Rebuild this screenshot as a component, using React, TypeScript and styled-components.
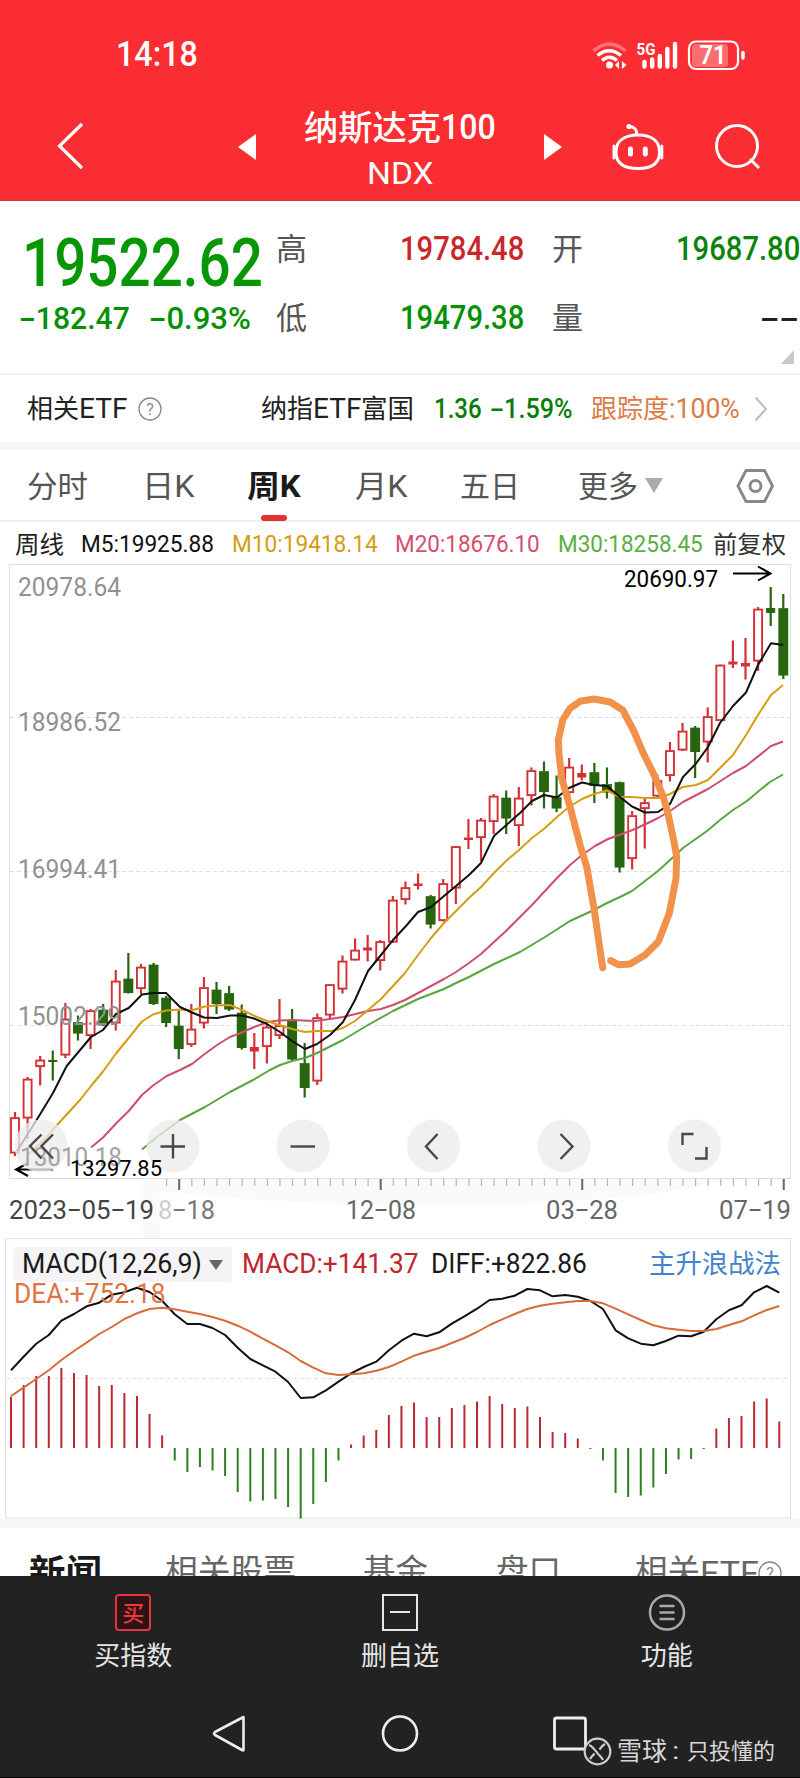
import React, { useLayoutEffect, useRef, useState } from "react";
import styled, { createGlobalStyle } from "styled-components";

const NUM = `Roboto, "Noto Sans CJK SC", sans-serif`;

const Global = createGlobalStyle`
  * { box-sizing: border-box; }
  body { margin: 0; background: #fff; font-family: ${NUM}; color: #222; }
  svg { display: block; flex: none; }
`;

/* ---------- text that is condensed to a given width ---------- */

const FitBox = styled.span<{ $w: number; $size: number; $color?: string; $weight?: number; $ml?: number }>`
  display: block;
  flex: none;
  width: ${(p) => p.$w}px;
  margin-left: ${(p) => p.$ml ?? 0}px;
  font-size: ${(p) => p.$size}px;
  line-height: 1;
  font-weight: ${(p) => p.$weight ?? 400};
  color: ${(p) => p.$color ?? "inherit"};
  white-space: pre;
`;
const FitInner = styled.span`
  display: inline-block;
  transform-origin: 0 50%;
`;
const Dash = styled.span`
  display: inline-block;
  width: 0.56em;
  text-align: center;
  transform: scaleX(1.7);
`;

type FitProps = { w: number; size: number; color?: string; weight?: number; ml?: number; children: string };

function Fit({ w, size, color, weight, ml, children }: FitProps) {
  const ref = useRef<HTMLSpanElement>(null);
  const [scale, setScale] = useState(1);
  useLayoutEffect(() => {
    if (ref.current) setScale(w / ref.current.offsetWidth);
  }, [w, size, weight, children]);
  return (
    <FitBox $w={w} $size={size} $color={color} $weight={weight} $ml={ml}>
      <FitInner ref={ref} style={{ transform: `scaleX(${scale})` }}>
        {children.split(/(-)/).map((part, i) => (part === "-" ? <Dash key={i}>-</Dash> : part))}
      </FitInner>
    </FitBox>
  );
}

/* ---------- layout parts ---------- */

const Page = styled.main`
  width: 800px;
  height: 1778px;
  display: flex;
  flex-direction: column;
  overflow: hidden;
  background: #fff;
`;
const Header = styled.header`
  height: 201px;
  flex: none;
  background: #fa2d33;
  border-bottom: 1px solid #c5393c;
  color: #fff;
`;
const StatusBar = styled.div`
  height: 108px;
  padding: 1px 54px 0 116px;
  display: flex;
  align-items: center;
  justify-content: space-between;
`;
const TitleBar = styled.div`
  height: 92px;
  padding: 0 40px 0 56px;
  display: flex;
  align-items: flex-start;
`;
const IconSlot = styled.span<{ $ml: number; $mt: number }>`
  flex: none;
  margin: ${(p) => p.$mt}px 0 0 ${(p) => p.$ml}px;
`;
const Titles = styled.div`
  width: 192px;
  margin-left: 48px;
  display: flex;
  flex-direction: column;
  align-items: center;
  gap: 11px;
`;
const TitleLine = styled.div`
  display: flex;
  align-items: center;
  height: 38px;
  padding-top: 1px;
`;

const Quote = styled.section`
  height: 174px;
  flex: none;
  padding-left: 19px;
  display: grid;
  grid-template-columns: 257px 124px 152px 124px 124px;
  grid-template-rows: 66px 72px 20px;
  padding-top: 15px;
  border-bottom: 2px solid #f1f1f1;
  align-items: center;
`;
const PriceCell = styled.div`
  padding: 29px 0 0 3px;
`;
const ChangeCell = styled.div`
  display: flex;
  gap: 19px;
`;
const Corner = styled.div`
  grid-column: 1 / -1;
  align-self: start;
  margin-top: -4px;
  display: flex;
  justify-content: flex-end;
  padding-right: 6px;
`;

const EtfRow = styled.section`
  height: 67px;
  flex: none;
  display: flex;
  align-items: center;
  padding: 1px 0 0 27px;
`;
const Band = styled.div<{ $h: number }>`
  height: ${(p) => p.$h}px;
  flex: none;
  background: #f6f6f6;
`;

const Tabs = styled.nav`
  height: 72px;
  flex: none;
  display: flex;
  align-items: center;
  padding-left: 27px;
  border-bottom: 2px solid #efefef;
`;
const Tab = styled.div<{ $ml?: number }>`
  position: relative;
  flex: none;
  margin-left: ${(p) => p.$ml ?? 0}px;
  height: 70px;
  padding-top: 3px;
  display: flex;
  align-items: center;
`;
const Underline = styled.i`
  position: absolute;
  left: 50%;
  bottom: -1px;
  width: 26px;
  height: 6px;
  margin-left: -13px;
  border-radius: 3px;
  background: #e03232;
`;
const MaRow = styled.div`
  height: 42px;
  flex: none;
  display: flex;
  align-items: center;
  padding: 3px 0 0 15px;
`;
const KChart = styled.section`
  height: 674px;
  flex: none;
`;
const MacdPanel = styled.section`
  position: relative;
  height: 281px;
  flex: none;
`;
const MacdHead = styled.div`
  position: absolute;
  inset: 8px 0 auto 13px;
  height: 36px;
  display: flex;
  align-items: center;
`;
const MacdPick = styled.div`
  width: 219px;
  height: 35px;
  padding: 1px 0 0 9px;
  display: flex;
  align-items: center;
  border-radius: 3px;
  background: #f5f3f5;
`;
const DeaLabel = styled.div`
  position: absolute;
  left: 14px;
  top: 43px;
`;

const NewsTabs = styled.nav`
  height: 48px;
  flex: none;
  overflow: hidden;
  display: flex;
  align-items: flex-start;
  padding: 28px 0 0 29px;
  background: #fff;
`;

const Bottom = styled.footer`
  height: 202px;
  flex: none;
  background: #222;
  border-bottom: 1px solid #000;
  position: relative;
`;
const Actions = styled.div`
  height: 104px;
  padding-top: 18px;
  display: grid;
  grid-template-columns: repeat(3, 1fr);
`;
const Action = styled.div`
  display: flex;
  flex-direction: column;
  align-items: center;
  gap: 12px;
  color: #e6e6e6;
`;
const BuyBox = styled.div`
  width: 36px;
  height: 37px;
  border: 2px solid #e0363c;
  border-radius: 4px;
  color: #ee383e;
  background: #2c1416;
  font: 500 22px/31px "Noto Sans CJK SC", sans-serif;
  text-align: center;
`;
const SystemNav = styled.div`
  padding: 34px 0 0 212px;
  display: flex;
  align-items: flex-start;
`;
const Watermark = styled.div`
  position: absolute;
  left: 583px;
  bottom: 11px;
  display: flex;
  align-items: center;
  color: #d8d8d8;
`;

/* ---------- chart data ---------- */

const STEP = 12.595;
/* high, body top, body bottom, low, rising */
const candles: [number, number, number, number, number][] = [
  [1112, 1117.5, 1153, 1156, 1], [1077, 1079, 1118, 1139, 1], [1056, 1060, 1066.5, 1085.5, 1], [1050.5, 1060.5, 1061.5, 1080.5, 0],
  [1003, 1019, 1055, 1058, 1], [1015.5, 1022.5, 1033, 1040.5, 0], [1009, 1010.5, 1035.5, 1049, 1], [1004, 1010, 1025, 1026, 0],
  [970, 981, 1023, 1030.5, 1], [953, 979, 992.5, 993.5, 0], [964, 967, 988.5, 994, 1], [963, 965, 1003.5, 1005, 0],
  [996, 998, 1022.5, 1027, 0], [1010.5, 1026, 1048.5, 1059, 0], [1004, 1029, 1044.5, 1047, 1], [977, 987.5, 1023, 1028.5, 1],
  [982, 990, 1003.5, 1014, 0], [986, 993.5, 1009, 1011, 0], [1004.5, 1013, 1047.5, 1049.5, 0], [1033, 1047.5, 1051, 1069, 1],
  [1025, 1027, 1046.5, 1063.5, 1], [999, 1025.5, 1035.5, 1039, 1], [1009, 1021, 1059, 1060, 0], [1043, 1063.5, 1087.5, 1097.5, 0],
  [1013.5, 1017.5, 1081, 1085, 1], [984, 984.5, 1015, 1018, 1], [955.5, 961, 989, 993.5, 1], [938.5, 950, 960, 960.5, 1],
  [935, 948, 950, 961.5, 1], [940, 941.5, 960.5, 970.5, 1], [896, 900, 942, 943, 1], [881.5, 887.5, 899.5, 904.5, 1],
  [873.5, 884, 885.5, 889.5, 1], [895, 896.5, 924, 928.5, 0], [879, 883.5, 920.5, 921.5, 1], [846, 846.5, 888, 904, 1],
  [819, 838, 839.5, 849, 1], [818, 820, 837.5, 861, 1], [794, 796, 821.5, 834, 1], [790.5, 798, 818, 834, 0],
  [787, 798, 825.5, 846, 1], [767.5, 770.5, 795.5, 805.5, 1], [761.5, 771.5, 791.5, 808.5, 0], [775.5, 797.5, 808, 812, 0],
  [758, 767, 792.5, 797, 1], [764.5, 773.5, 777, 780.5, 1], [763, 772.5, 785.5, 803, 0], [767.5, 784.5, 792, 798.5, 0],
  [781.5, 782.5, 867, 872.5, 0], [811, 815.5, 858.5, 869.5, 1], [799, 802.5, 808.5, 848.5, 1], [774.5, 780.5, 796, 797, 1],
  [742, 750.5, 775.5, 781.5, 1], [723, 731, 750, 751, 1], [726, 728, 751.5, 778, 0], [707.5, 716.5, 742, 762.5, 1],
  [664.5, 665, 720.5, 721, 1], [640.5, 662, 664, 668, 1], [638, 663.5, 666, 679.5, 1], [607, 609, 661, 671, 1],
  [587, 608.5, 612.5, 626, 0], [594, 608.5, 675, 679, 0],
];

const m5 = "17,1151 36.6,1120 53,1093 66.7,1066 91,1037 103,1030 116,1014 128.7,1008 142,994.5 153,993 166,993 180,1007 192,1012.5 204,1017.5 217,1018 230,1015.5 242,1015.5 254,1018.5 267,1024 280,1032 292,1041 305,1049 317,1044 330,1035 343,1022 355,1000 368,971 381,955 393,940 406,926 418,912 431,907 444,896 456,886 469,875 481,863 494,836 512,820 520,813 532,801 544,795 557,797.5 569,788 582,782.5 594,785 607,786 620,797 632,806.5 645,812.5 658,812 670,804 683,777 696,763.5 708,747 720,723 733,706 746,692.5 758,665 771,643.3 783.3,645";
const m10 = "28,1155 43,1141 58,1124 80,1100 91,1086 103,1071.5 116,1053.5 128.7,1038 142,1021.5 153,1014.5 166,1010.5 180,1009.5 192,1010.3 204,1006.7 217,1005.3 230,1005 242,1010 254,1015.7 267,1021 279,1025 292,1029 305,1032 317,1031 332,1031 343,1028 355,1021 368,1010 381,999 393,986 405,973 418,955 431,938 444,923 456,911 469,898 481,887 494,873 506,861 519,850 532,838 545,828 557,817 569,807 582,799 594,794 607,790.5 620,797 632,797 645,798 658,798 670,794 683,787 696,785 708,780 720,768 733,755 746,735 758,715 771,695 783,685";
const m20 = "91,1147.5 103,1137.5 116,1123.5 128.7,1111 142,1095 153,1085.5 166.7,1076 180,1070 192,1064 204,1054.5 217,1045 230,1037 242,1032.5 254,1027 268,1022 279,1020.5 292,1020 315,1021 330,1019 343,1017 368,1011 381,1009 393,1005 405,1000 420,992 431,986 444,979 456,972 469,963 481,954 494,942 506,931 520,917 532,905 557,878 570,865 582,855 595,846 608,839 622,834 635,829 650,822 658,818 670,811 683,802 708,789 733,773 746,766 771,746 783,741.5";
const m30 = "142,1149.5 157,1137 180,1120 205,1107 230,1092 254,1079.5 270,1070 280,1065 292,1061 305,1058 317,1053 343,1040 368,1025 393,1011 418,999 444,989 456,983 469,977 494,964 520,952 545,937 570,921 594,910 607,903 622,896 632,891 658,871 670,860 683,848 707,831 720,820 733,810 747,801 760,790 770,782 783,774.5";
const mark = "602.7,967.7 599.3,945 594,908.3 586.7,866.7 580,845 570,806.7 561.7,778.3 559,753.3 558.3,740 562.7,720 570,708.3 580,701.3 594,699 610,702 622.7,710 633.3,730 643.3,753.3 653.3,773.3 663.3,796.7 668.3,815 674,841.7 676.7,856.7 676,878.3 669.3,913.3 658.3,941.7 645,955 630,964 618.3,964.7 610.7,960.7";

const bars = [
  51.3, 63, 72, 72, 80, 75, 73, 62, 63, 55, 52, 34, 12.5, -12.5, -24, -19, -22.5, -28, -44, -53.5, -52.5, -51, -59, -70.5, -56, -34,
  -12.5, 3.5, 12.5, 18, 33, 42, 45.5, 31, 31, 40, 43, 46.5, 52, 44, 40, 41.5, 31, 16, 15, 9.5, -1, -12.5, -45, -49, -47.5, -39.5, -26,
  -11.5, -11, -1, 19.5, 30, 32, 46.5, 49.5, 26.5,
];
/* one value per week, thirds of a pixel below the panel's top edge */
const diff = [
  421, 380, 341, 315, 272, 252, 229, 218, 194, 187, 173, 186, 212, 253, 282, 282, 294, 315, 353, 387, 406, 425, 456, 504, 502, 481, 455,
  430, 411, 395, 361, 332, 311, 319, 307, 281, 259, 236, 210, 206, 197, 177, 181, 199, 195, 200, 213, 237, 301, 325, 341, 346, 333, 317,
  319, 305, 268, 241, 226, 187, 168, 188,
];
const dea = [
  498, 473, 447, 421, 390, 363, 338, 312, 291, 267, 250, 237, 233, 238, 245, 252, 261, 272, 287, 305, 326, 346, 367, 393, 413, 430, 435,
  433, 430, 422, 411, 395, 377, 365, 354, 339, 324, 306, 285, 268, 252, 237, 227, 221, 217, 213, 213, 220, 236, 253, 270, 286, 295, 299,
  303, 303, 297, 285, 274, 256, 240, 228,
];
const toLine = (v: number[]) => v.map((y, i) => `${(11 + i * STEP).toFixed(1)},${(1230 + y / 3).toFixed(1)}`).join(" ");

const Label = styled.text`
  font-family: ${NUM};
`;

/* date label whose dashes are as wide as a digit */
function DateLabel({ x, w, text, fill }: { x: number; w: number; text: string; fill: string }) {
  const cell = w / text.length;
  return (
    <>
      {text.split(/(-)/).reduce<{ at: number; nodes: React.ReactNode[] }>(
        (acc, part, i) => {
          const px = x + acc.at * cell;
          acc.nodes.push(
            part === "-" ? (
              <Label key={i} transform={`translate(${px + cell / 2} 1218) scale(1.75 1)`} fontSize="26" fill={fill} textAnchor="middle">-</Label>
            ) : (
              <Label key={i} x={px} y="1219" fontSize="26" fill={fill} textLength={part.length * cell} lengthAdjust="spacingAndGlyphs">{part}</Label>
            ),
          );
          acc.at += part.length;
          return acc;
        },
        { at: 0, nodes: [] },
      ).nodes}
    </>
  );
}

function CandleChart() {
  return (
    <svg width="800" height="674" viewBox="0 564 800 674">
      <path d="M143 1179H730C700 1190 600 1203 480 1205S220 1200 160 1190V1238H143Z" fill="#fbfafb" />
      <rect x="9.5" y="564.5" width="781" height="614" fill="none" stroke="#dedede" />
      <g stroke="#dedede" strokeDasharray="4 3">
        <path d="M10 717.5H790M10 871.5H790M10 1025.5H790" />
      </g>
      {candles.map(([h, t, b, l, up], i) => {
        const x = 15 + i * STEP;
        const c = up ? "#d23236" : "#27650f";
        const thin = b - t < 5;
        return (
          <g key={i} stroke={c} strokeWidth="2.2" fill={c}>
            <path d={`M${x} ${h}V${t}M${x} ${b}V${l}`} />
            {thin ? (
              <rect x={x - 4} y={t} width="8" height={Math.max(b - t, 1)} strokeWidth="1" />
            ) : (
              <rect x={x - 4} y={t + 0.6} width="8" height={b - t - 1} fill={up ? "#fff" : c} strokeWidth="1.9" />
            )}
          </g>
        );
      })}
      <g fill="none" strokeWidth="2" strokeLinejoin="round">
        <polyline points={m30} stroke="#58a63c" />
        <polyline points={m20} stroke="#cf4d6e" />
        <polyline points={m10} stroke="#d49d12" />
        <polyline points={m5} stroke="#111" />
      </g>
      <polyline points={mark} fill="none" stroke="#f2924a" strokeWidth="7" strokeLinecap="round" strokeLinejoin="round" />

      <path d="M733 573.5H770M758 566.5L770.5 573.5L758 580.5" fill="none" stroke="#000" strokeWidth="2" />
      <path d="M16 1169.5H53M28 1163L16 1169.5L28 1176" fill="none" stroke="#000" strokeWidth="2" />
      <g fill="#ececec" fillOpacity="0.78">
        {[41, 173, 303, 433.5, 564, 694.5].map((x) => (
          <circle key={x} cx={x} cy="1146" r="26.5" />
        ))}
      </g>
      <g fontSize="26" fill="#919191">
        {([["20978.64", 596], ["18986.52", 730.5], ["16994.41", 878], ["15002.29", 1025]] as [string, number][]).map(([t, y]) => (
          <Label key={t} x="18" y={y} textLength="103" lengthAdjust="spacingAndGlyphs">{t}</Label>
        ))}
        <Label x="20" y="1166" fill="#a3a3a3" textLength="102" lengthAdjust="spacingAndGlyphs">13010.18</Label>
      </g>
      <Label x="624" y="587" fontSize="23.5" fill="#000" textLength="94" lengthAdjust="spacingAndGlyphs">20690.97</Label>
      <Label x="70" y="1176" fontSize="22.5" fill="#000" textLength="92" lengthAdjust="spacingAndGlyphs">13297.85</Label>
      <g fill="none" stroke="#484848" strokeWidth="2.4">
        <path d="M41.5 1134.5L30 1146L41.5 1158.5M53 1134.5L41.5 1146L53 1158.5" />
        <path d="M160.5 1146.5H185M173 1134V1158.5" />
        <path d="M290.5 1146.5H315" />
        <path d="M437.5 1134L426 1146.5L437.5 1159" />
        <path d="M560.5 1134L572.5 1146.5L560.5 1159" />
        <path d="M682.5 1145V1134H693.5M706.5 1147V1158.5H695" />
      </g>
      {Array.from({ length: 50 }, (_, i) => {
        const major = (i + 15) % 16 === 0;
        return (
          <path key={i} d={`M${166.6 + i * STEP} 1179V${major ? 1190 : 1186}`} stroke={major ? "#666" : "#b5b5b5"} strokeWidth={major ? 2 : 1.2} />
        );
      })}
      <DateLabel x={9} w={145} text="2023-05-19" fill="#444" />
      <DateLabel x={158} w={57} text="8-18" fill="#777" />
      <rect x="156" y="1196" width="16" height="27" fill="#fdfcfd" fillOpacity="0.65" />
      <DateLabel x={346} w={70} text="12-08" fill="#666" />
      <DateLabel x={546} w={72} text="03-28" fill="#666" />
      <DateLabel x={719} w={72} text="07-19" fill="#666" />
    </svg>
  );
}

function MacdChart() {
  return (
    <svg width="800" height="281" viewBox="0 1238 800 281">
      <rect x="5.5" y="1238.5" width="785" height="279.5" fill="none" stroke="#e2e2e2" />
      <path d="M6 1378.5H790" stroke="#e0e0e0" strokeDasharray="4 3" />
      {bars.map((h, i) => (
        <path key={i} d={`M${11 + i * STEP} 1448V${1448 - h}`} stroke={h > 0 ? "#b92a30" : "#2f7d22"} strokeWidth="2" />
      ))}
      <g fill="none" strokeWidth="2" strokeLinejoin="round">
        <polyline points={toLine(diff)} stroke="#111" />
        <polyline points={toLine(dea)} stroke="#d96b38" />
      </g>
    </svg>
  );
}

/* ---------- icons ---------- */

const StatusIcons = () => (
  <svg width="156" height="34" viewBox="590 37 156 34" fill="none" stroke="#fff">
    <path d="M593.5 50Q609 36 625.5 50" strokeWidth="3.5" strokeOpacity="0.35" />
    <path d="M597.5 54.5Q609 45 621 54.5" strokeWidth="3.5" />
    <path d="M602 59.5Q609.5 53 617 59.5" strokeWidth="3.5" />
    <circle cx="609.5" cy="64" r="3.5" fill="#fff" stroke="none" />
    <path d="M619 60V68L615 64ZM622 60V68L626.5 64Z" fill="#fff" stroke="none" />
    <Label x="636.5" y="53.5" fontSize="17" fontWeight="700" fill="#fff" stroke="none" textLength="19" lengthAdjust="spacingAndGlyphs">5G</Label>
    <path d="M644.5 61V65.5M652.2 58.5V65.5M659.8 55V65.5M667.3 48V65.5M675 43V65.5" strokeWidth="4.4" strokeLinecap="round" />
    <rect x="692" y="43" width="36" height="23" rx="4" fill="#fff" fillOpacity="0.3" stroke="none" />
    <rect x="689" y="40.5" width="49" height="27.5" rx="7" strokeWidth="2.2" />
    <path d="M743 51.5V57" strokeWidth="3.5" strokeLinecap="round" />
    <Label x="699.5" y="63" fontSize="25" fontWeight="600" fill="#fff" stroke="none" textLength="27" lengthAdjust="spacingAndGlyphs">71</Label>
  </svg>
);

const Help = ({ size = 24 }: { size?: number }) => (
  <svg width={size} height={size} viewBox="0 0 24 24">
    <circle cx="12" cy="12" r="11" fill="none" stroke="#888" strokeWidth="1.3" />
    <Label x="12" y="17.5" fontSize="16" fill="#888" textAnchor="middle">?</Label>
  </svg>
);

export default function App() {
  return (
    <Page>
      <Global />
      <Header>
        <StatusBar>
          <Fit w={82} size={35} weight={500}>14:18</Fit>
          <StatusIcons />
        </StatusBar>
        <TitleBar>
          <IconSlot $ml={0} $mt={14}>
            <svg width="28" height="48" viewBox="56 122 28 48"><path d="M82 124L59.5 146L82 168" fill="none" stroke="#fff" strokeWidth="3.2" /></svg>
          </IconSlot>
          <IconSlot $ml={154} $mt={26}>
            <svg width="18" height="26" viewBox="0 0 18 26"><path d="M18 0V26L0 13Z" fill="#fff" /></svg>
          </IconSlot>
          <Titles>
            <TitleLine>
              <Fit w={137} size={34} weight={500}>纳斯达克</Fit>
              <Fit w={55} size={35} weight={500}>100</Fit>
            </TitleLine>
            <Fit w={67} size={32}>NDX</Fit>
          </Titles>
          <IconSlot $ml={48} $mt={26}>
            <svg width="18" height="26" viewBox="0 0 18 26"><path d="M0 0V26L18 13Z" fill="#fff" /></svg>
          </IconSlot>
          <IconSlot $ml={49} $mt={14}>
            <svg width="54" height="50" viewBox="611 122 54 50" fill="none" stroke="#fff" strokeWidth="3">
              <path d="M638 135C652 135 659.5 141 659.5 152C659.5 163 653 168.5 638 168.5S616 163 616 152C616 141 624 135 638 135Z" />
              <path d="M636.5 135Q637.5 127 629 126.5" />
              <circle cx="629" cy="126.5" r="2.6" fill="#fff" stroke="none" />
              <path d="M614 146V158M661.8 146V158" strokeLinecap="round" />
              <path d="M630.5 149V154M645.3 149V154" strokeWidth="5" strokeLinecap="round" />
            </svg>
          </IconSlot>
          <IconSlot $ml={49} $mt={14}>
            <svg width="48" height="50" viewBox="714 122 48 50" fill="none" stroke="#fff" strokeWidth="3">
              <circle cx="737" cy="146" r="20.5" />
              <path d="M750 159L759 168" />
            </svg>
          </IconSlot>
        </TitleBar>
      </Header>

      <Quote>
        <PriceCell><Fit w={241} size={66} color="#069606" weight={500}>19522.62</Fit></PriceCell>
        <Fit w={31} size={31} color="#555">高</Fit>
        <Fit w={124} size={32.5} color="#c8282c" weight={500}>19784.48</Fit>
        <Fit w={31} size={31} color="#555">开</Fit>
        <Fit w={124} size={32.5} color="#0b840b" weight={500}>19687.80</Fit>
        <ChangeCell>
          <Fit w={111} size={32} color="#069006" weight={500}>-182.47</Fit>
          <Fit w={102} size={32} color="#069006" weight={500}>-0.93%</Fit>
        </ChangeCell>
        <Fit w={31} size={31} color="#555">低</Fit>
        <Fit w={124} size={32.5} color="#069006" weight={500}>19479.38</Fit>
        <Fit w={31} size={31} color="#555">量</Fit>
        <Fit w={39} ml={84} size={32} color="#222" weight={500}>--</Fit>
        <Corner>
          <svg width="13" height="14" viewBox="0 0 13 14"><path d="M13 0V14H0Z" fill="#c8c8c8" /></svg>
        </Corner>
      </Quote>

      <EtfRow>
        <Fit w={52} size={26} color="#222">相关</Fit>
        <Fit w={48} size={28} color="#222">ETF</Fit>
        <IconSlot $ml={11} $mt={-1}><Help /></IconSlot>
        <Fit w={52} ml={99} size={26} color="#222">纳指</Fit>
        <Fit w={48} size={28} color="#222">ETF</Fit>
        <Fit w={53} size={26} color="#222">富国</Fit>
        <Fit w={48} ml={20} size={27} color="#067d06" weight={500}>1.36</Fit>
        <Fit w={83} ml={8} size={27} color="#067d06" weight={500}>-1.59%</Fit>
        <Fit w={78} ml={18} size={26} color="#dd7c48">跟踪度</Fit>
        <Fit w={71} size={27} color="#dd7c48">:100%</Fit>
        <IconSlot $ml={14} $mt={-1}>
          <svg width="14" height="26" viewBox="0 0 14 26"><path d="M1.5 1.5L12 13L1.5 24.5" fill="none" stroke="#bbb" strokeWidth="2" /></svg>
        </IconSlot>
      </EtfRow>
      <Band $h={8} />

      <Tabs>
        <Tab><Fit w={61} size={30} color="#555">分时</Fit></Tab>
        <Tab $ml={54}><Fit w={52} size={31} color="#555">日K</Fit></Tab>
        <Tab $ml={53}><Fit w={54} size={31} color="#1a1a1a" weight={700}>周K</Fit><Underline /></Tab>
        <Tab $ml={54}><Fit w={52} size={31} color="#555">月K</Fit></Tab>
        <Tab $ml={53}><Fit w={60} size={30} color="#555">五日</Fit></Tab>
        <Tab $ml={58}>
          <Fit w={60} size={30} color="#555">更多</Fit>
          <IconSlot $ml={7} $mt={-2}>
            <svg width="18" height="15" viewBox="0 0 18 15"><path d="M0 0H18L9 15Z" fill="#aaa" /></svg>
          </IconSlot>
        </Tab>
        <IconSlot $ml={73} $mt={2}>
          <svg width="38" height="36" viewBox="736 468 38 36" fill="none" stroke="#888" strokeWidth="2.9">
            <path d="M746 470.5H764.5L772.5 486L764.5 501.5H746L738 486Z" strokeLinejoin="round" />
            <circle cx="755.5" cy="486" r="5.5" />
          </svg>
        </IconSlot>
      </Tabs>
      <MaRow>
        <Fit w={49} size={24} color="#222">周线</Fit>
        <Fit w={133} ml={17} size={24.5} color="#111">M5:19925.88</Fit>
        <Fit w={146} ml={18} size={24.5} color="#d39c12">M10:19418.14</Fit>
        <Fit w={145} ml={17} size={24.5} color="#d4506e">M20:18676.10</Fit>
        <Fit w={145} ml={18} size={24.5} color="#5cae42">M30:18258.45</Fit>
        <Fit w={73} ml={10} size={24} color="#333">前复权</Fit>
      </MaRow>

      <KChart><CandleChart /></KChart>
      <MacdPanel>
        <MacdChart />
        <MacdHead>
          <MacdPick>
            <Fit w={180} size={27} color="#1a1a1a">MACD(12,26,9)</Fit>
            <IconSlot $ml={7} $mt={0}>
              <svg width="14" height="10" viewBox="0 0 14 10"><path d="M0 0H14L7 10Z" fill="#666" /></svg>
            </IconSlot>
          </MacdPick>
          <Fit w={176} ml={10} size={27} color="#c2242e">MACD:+141.37</Fit>
          <Fit w={156} ml={13} size={27} color="#1a1a1a">DIFF:+822.86</Fit>
          <Fit w={132} ml={62} size={26} color="#4482cc">主升浪战法</Fit>
        </MacdHead>
        <DeaLabel><Fit w={152} size={27} color="#df7440">DEA:+752.18</Fit></DeaLabel>
      </MacdPanel>
      <Band $h={9} />

      <NewsTabs>
        <Fit w={73} size={36} color="#1a1a1a" weight={700}>新闻</Fit>
        <Fit w={131} ml={63} size={32.5} color="#666">相关股票</Fit>
        <Fit w={65} ml={67} size={32.5} color="#666">基金</Fit>
        <Fit w={65} ml={68} size={32.5} color="#666">盘口</Fit>
        <Fit w={65} ml={74} size={32.5} color="#666">相关</Fit>
        <Fit w={59} size={34} color="#666">ETF</Fit>
        <IconSlot $ml={-1} $mt={5}><Help size={24} /></IconSlot>
      </NewsTabs>

      <Bottom>
        <Actions>
          <Action>
            <BuyBox>买</BuyBox>
            <Fit w={78} size={26}>买指数</Fit>
          </Action>
          <Action>
            <svg width="36" height="37" viewBox="0 0 36 37" fill="none" stroke="#e6e6e6" strokeWidth="2"><rect x="1" y="1" width="34" height="35" /><path d="M8 18H28" /></svg>
            <Fit w={78} size={26}>删自选</Fit>
          </Action>
          <Action>
            <svg width="38" height="37" viewBox="0 0 38 37" fill="none" stroke="#aaa" strokeWidth="2.5"><circle cx="19" cy="18.5" r="17" /><path d="M11.5 12H26.5M11.5 18.5H26.5M11.5 25H26.5" /></svg>
            <Fit w={52} size={26}>功能</Fit>
          </Action>
        </Actions>
        <SystemNav>
          <svg width="34" height="40" viewBox="212 1714 34 40"><path d="M243.5 1717V1750Q243.5 1751 242 1750L215 1735Q213 1733.5 215 1732Z" fill="none" stroke="#ededed" strokeWidth="2.6" strokeLinejoin="round" /></svg>
          <IconSlot $ml={135} $mt={0}>
            <svg width="38" height="40" viewBox="381 1714 38 40"><circle cx="400" cy="1733.5" r="17" fill="none" stroke="#ededed" strokeWidth="2.6" /></svg>
          </IconSlot>
          <IconSlot $ml={133} $mt={0}>
            <svg width="36" height="40" viewBox="552 1714 36 40"><rect x="554.5" y="1718" width="31" height="31" rx="2" fill="none" stroke="#ededed" strokeWidth="2.8" /></svg>
          </IconSlot>
        </SystemNav>
        <Watermark>
          <svg width="29" height="29" viewBox="0 0 29 29" fill="none" stroke="#d0d0d0" strokeWidth="2.2">
            <circle cx="14.5" cy="14.5" r="12.8" fill="#222" />
            <path d="M6 8C9 9 12 13 14 15.5C16 18.500 18.500 20 20 23M22 7C20 8 18 10.500 16.500 12.500M11.500 16.500C10 18.500 8 20 7 22" />
          </svg>
          <Fit w={50} ml={5} size={25}>雪球</Fit>
          <Fit w={8} ml={5} size={23}>:</Fit>
          <Fit w={88} ml={7} size={22}>只投懂的</Fit>
        </Watermark>
      </Bottom>
    </Page>
  );
}
